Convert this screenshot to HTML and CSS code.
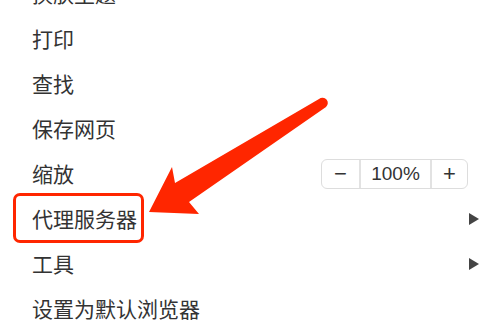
FILE: index.html
```html
<!DOCTYPE html>
<html lang="zh-CN">
<head>
  <meta charset="UTF-8">
  <meta name="viewport" content="width=device-width, initial-scale=1.0">
  <title>菜单</title>
  <link rel="stylesheet" href="styles.css">
</head>
<body>
  <ul class="menu">
    <li class="item"><span class="label">换肤主题</span></li>
    <li class="item"><span class="label">打印</span></li>
    <li class="item"><span class="label">查找</span></li>
    <li class="item"><span class="label">保存网页</span></li>
    <li class="item">
      <span class="label">缩放</span>
      <div class="zoom">
        <span class="zoom-btn minus">&minus;</span>
        <span class="zoom-value">100%</span>
        <span class="zoom-btn plus">+</span>
      </div>
    </li>
    <li class="item"><span class="label marked">代理服务器</span><span class="caret"></span></li>
    <li class="item"><span class="label">工具</span><span class="caret"></span></li>
    <li class="item"><span class="label">设置为默认浏览器</span></li>
  </ul>

  <svg class="arrow" width="500" height="329" viewBox="0 0 500 329">
    <path d="M149 212 L172 167 L175 183 L319 99 A5.3 5.3 0 0 1 326 107 L189 202 L199 214 Z" fill="#ff2600"/>
  </svg>
</body>
</html>
```

FILE: styles.css
```css
body { margin: 0; background: #fff; font-family: "Noto Sans CJK SC", "Noto Sans", sans-serif; color: #333; overflow: hidden; }
.menu { list-style: none; margin: -29px 0 0 0; padding: 0; }
.item { display: flex; align-items: center; height: 45px; padding: 0 20px 0 32px; }
.label { flex-grow: 1; font-size: 21px; line-height: 1; }
.label.marked { position: relative; flex-grow: 0; margin-right: auto; }
.label.marked::before { content: ""; position: absolute; left: -19px; right: -7px; top: -15px; bottom: -14px; border: 3px solid #ff2600; border-radius: 7px; }
.caret { width: 0; height: 0; border-top: 6px solid transparent; border-bottom: 6px solid transparent; border-left: 10px solid #444; margin-right: 1px; }
.zoom { display: flex; align-items: stretch; height: 28px; border: 1px solid #ddd; border-radius: 6px; margin-right: 12px; margin-top: 1px; font-family: "Liberation Sans", Arial, sans-serif; color: #333; }
.zoom-btn { width: 37px; display: flex; align-items: center; justify-content: center; font-size: 22px; }
.zoom-btn.plus { width: 35px; }
.zoom-value { width: 69px; display: flex; align-items: center; justify-content: center; font-size: 19px; border-left: 2px solid #e2e2e2; border-right: 2px solid #e2e2e2; }
.arrow { position: absolute; left: 0; top: 0; }
```
